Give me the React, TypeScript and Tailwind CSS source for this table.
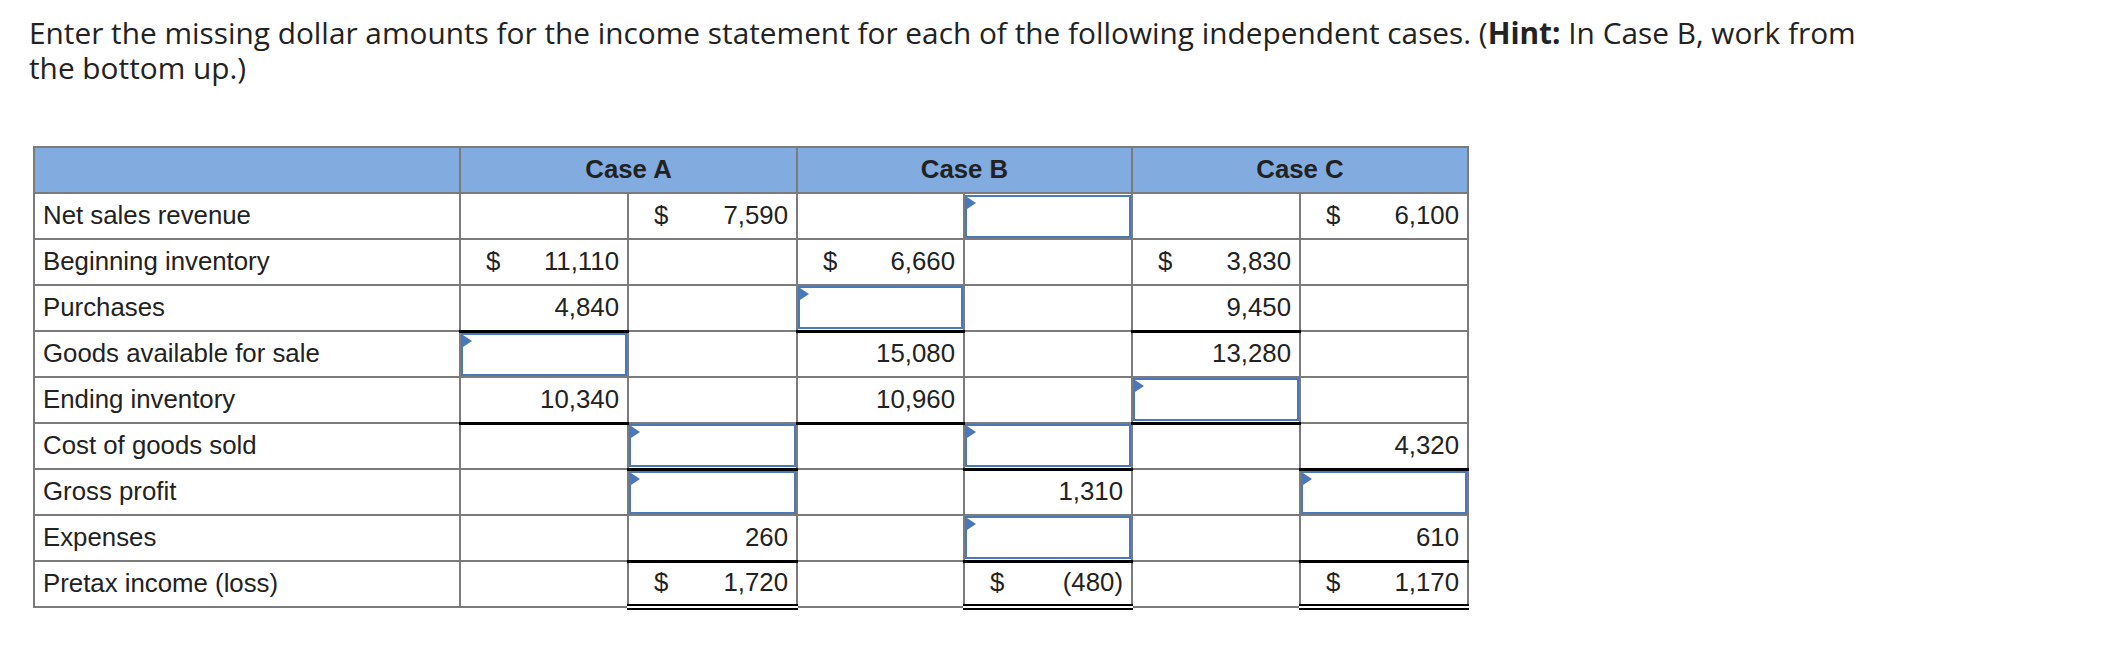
import React from "react";

type Cell =
  | null
  | {
      t?: string;
      d?: boolean;
      input?: boolean;
      ul?: "s" | "d";
    };

type Row = { label: string; cells: Cell[] };

const rows: Row[] = [
  {
    label: "Net sales revenue",
    cells: [null, { t: "7,590", d: true }, null, { input: true }, null, { t: "6,100", d: true }],
  },
  {
    label: "Beginning inventory",
    cells: [{ t: "11,110", d: true }, null, { t: "6,660", d: true }, null, { t: "3,830", d: true }, null],
  },
  {
    label: "Purchases",
    cells: [{ t: "4,840", ul: "s" }, null, { input: true, ul: "s" }, null, { t: "9,450", ul: "s" }, null],
  },
  {
    label: "Goods available for sale",
    cells: [{ input: true }, null, { t: "15,080" }, null, { t: "13,280" }, null],
  },
  {
    label: "Ending inventory",
    cells: [{ t: "10,340", ul: "s" }, null, { t: "10,960", ul: "s" }, null, { input: true, ul: "s" }, null],
  },
  {
    label: "Cost of goods sold",
    cells: [null, { input: true, ul: "s" }, null, { input: true, ul: "s" }, null, { t: "4,320", ul: "s" }],
  },
  {
    label: "Gross profit",
    cells: [null, { input: true }, null, { t: "1,310" }, null, { input: true }],
  },
  {
    label: "Expenses",
    cells: [null, { t: "260", ul: "s" }, null, { input: true, ul: "s" }, null, { t: "610", ul: "s" }],
  },
  {
    label: "Pretax income (loss)",
    cells: [null, { t: "1,720", d: true, ul: "d" }, null, { t: "(480)", d: true, ul: "d" }, null, { t: "1,170", d: true, ul: "d" }],
  },
];

function DataCell({ c }: { c: Cell }) {
  let cls = "border-2 border-[#7b7b7b] p-0 align-middle";
  if (c?.ul === "s") cls = "border-2 border-[#7b7b7b] border-b-[3px] border-b-black p-0 align-middle";
  if (c?.ul === "d")
    cls = "border-2 border-[#7b7b7b] border-b-[6px] border-b-black [border-bottom-style:double] p-0 align-middle";
  if (!c) return <td className={cls} />;
  if (c.input) {
    return (
      <td className={cls}>
        <div className="relative h-[43px] border-2 border-[#4a78bb] bg-white">
          <div className="absolute left-0 top-0 h-0 w-0 border-l-[9px] border-y-[6px] border-l-[#4a78bb] border-y-transparent" />
        </div>
      </td>
    );
  }
  return (
    <td className={cls}>
      <div className="flex items-center justify-between pl-[25px] pr-[8px]">
        <span>{c.d ? "$" : ""}</span>
        <span>{c.t}</span>
      </div>
    </td>
  );
}

export default function App() {
  return (
    <div className="min-h-[660px] w-[2128px] bg-white text-[#222222]">
      <div className="pl-[29px] pt-[15px]">
        <p
          className="w-[1950px] text-[29.8px] leading-[35px]"
          style={{ fontFamily: "'Open Sans', Lato, sans-serif" }}
        >
          Enter the missing dollar amounts for the income statement for each of the following independent cases. (
          <span className="font-bold">Hint:</span> In Case B, work from
          <br />
          the bottom up.)
        </p>
      </div>
      <div className="ml-[33px] mt-[61px]">
        <table
          className="table-fixed border-collapse text-[25.8px] leading-none"
          style={{ fontFamily: "'Liberation Sans', Arial, sans-serif", width: 1434 }}
        >
          <colgroup>
            <col className="w-[426px]" />
            <col className="w-[168px]" />
            <col className="w-[169px]" />
            <col className="w-[167px]" />
            <col className="w-[168px]" />
            <col className="w-[168px]" />
            <col className="w-[168px]" />
          </colgroup>
          <thead>
            <tr className="h-[46px] bg-[#82abdf]">
              <th className="border-2 border-[#7b7b7b]" />
              <th colSpan={2} className="border-2 border-[#7b7b7b] text-center font-bold">
                Case A
              </th>
              <th colSpan={2} className="border-2 border-[#7b7b7b] text-center font-bold">
                Case B
              </th>
              <th colSpan={2} className="border-2 border-[#7b7b7b] text-center font-bold">
                Case C
              </th>
            </tr>
          </thead>
          <tbody>
            {rows.map((r) => (
              <tr key={r.label} className="h-[46px]">
                <td className="border-2 border-[#7b7b7b] pl-[8px] text-left align-middle">{r.label}</td>
                {r.cells.map((c, i) => (
                  <DataCell key={i} c={c} />
                ))}
              </tr>
            ))}
          </tbody>
        </table>
      </div>
    </div>
  );
}
